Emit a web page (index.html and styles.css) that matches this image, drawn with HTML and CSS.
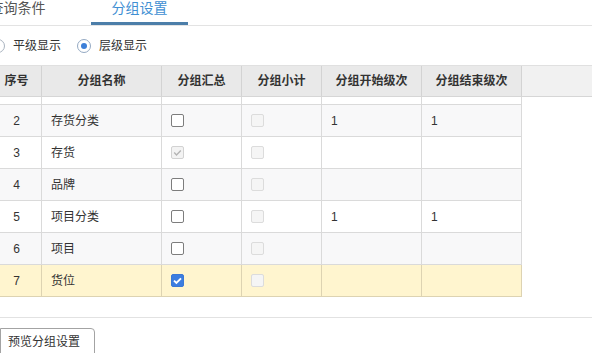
FILE: index.html
```html
<!DOCTYPE html>
<html lang="zh">
<head>
<meta charset="utf-8">
<title>分组设置</title>
<link rel="stylesheet" href="styles.css">
</head>
<body>
<div class="page">
  <div class="tabs">
    <div class="tab">查询条件</div>
    <div class="tab active">分组设置</div>
  </div>
  <div class="radios">
    <label class="radio-item first"><span class="radio"></span><span>平级显示</span></label>
    <label class="radio-item"><span class="radio on"></span><span>层级显示</span></label>
  </div>
  <div class="grid">
    <div class="head">
      <div class="hc">序号</div>
      <div class="hc">分组名称</div>
      <div class="hc">分组汇总</div>
      <div class="hc">分组小计</div>
      <div class="hc">分组开始级次</div>
      <div class="hc">分组结束级次</div>
      <div class="hfill"></div>
    </div>
    <div class="body">
      <div class="rows">
        <div class="row">
          <div class="c num"></div><div class="c"></div>
          <div class="c"></div><div class="c"></div>
          <div class="c"></div><div class="c"></div>
        </div>
        <div class="row alt">
          <div class="c num">2</div><div class="c">存货分类</div>
          <div class="c"><span class="cb"></span></div>
          <div class="c"><span class="cb dis"></span></div>
          <div class="c">1</div><div class="c">1</div>
        </div>
        <div class="row">
          <div class="c num">3</div><div class="c">存货</div>
          <div class="c"><span class="cb dis checked-dis"><svg viewBox="0 0 13 13" width="13" height="13"><path d="M3.2 6.6 L5.5 8.9 L9.8 4.4" fill="none" stroke="#b4b4b4" stroke-width="1.4"/></svg></span></div>
          <div class="c"><span class="cb dis"></span></div>
          <div class="c"></div><div class="c"></div>
        </div>
        <div class="row alt">
          <div class="c num">4</div><div class="c">品牌</div>
          <div class="c"><span class="cb"></span></div>
          <div class="c"><span class="cb dis"></span></div>
          <div class="c"></div><div class="c"></div>
        </div>
        <div class="row">
          <div class="c num">5</div><div class="c">项目分类</div>
          <div class="c"><span class="cb"></span></div>
          <div class="c"><span class="cb dis"></span></div>
          <div class="c">1</div><div class="c">1</div>
        </div>
        <div class="row alt">
          <div class="c num">6</div><div class="c">项目</div>
          <div class="c"><span class="cb"></span></div>
          <div class="c"><span class="cb dis"></span></div>
          <div class="c"></div><div class="c"></div>
        </div>
        <div class="row sel">
          <div class="c num">7</div><div class="c">货位</div>
          <div class="c"><span class="cb on"><svg viewBox="0 0 13 13" width="13" height="13"><path d="M3 6.6 L5.4 9 L10 4.3" fill="none" stroke="#ffffff" stroke-width="1.9"/></svg></span></div>
          <div class="c"><span class="cb dis"></span></div>
          <div class="c"></div><div class="c"></div>
        </div>
      </div>
    </div>
  </div>
  <div class="toolbar">
    <button class="btn">预览分组设置</button>
  </div>
</div>
</body>
</html>
```
FILE: styles.css
```css
html, body {
  margin: 0;
  padding: 0;
  background: #ffffff;
}
body {
  width: 592px;
  height: 353px;
  overflow: hidden;
  font-family: "Liberation Sans", "Noto Sans CJK SC", sans-serif;
  font-size: 12px;
  color: #333333;
}
.page {
  width: 592px;
}
.tabs {
  display: flex;
  gap: 25px;
  height: 25px;
  border-bottom: 1px solid #e3e3e3;
  margin-left: -31px;
}
.tab {
  box-sizing: border-box;
  width: 97px;
  height: 25px;
  text-align: center;
  font-size: 14px;
  line-height: 16px;
  color: #555555;
}
.tab.active {
  color: #3f8fd3;
  border-bottom: 3px solid #4c7ea9;
}
.radios {
  display: flex;
  align-items: center;
  height: 39px;
  gap: 16px;
}
.radio-item {
  display: flex;
  align-items: center;
  gap: 8px;
  line-height: 14px;
}
.radio-item.first {
  margin-left: -9px;
}
.radio {
  box-sizing: border-box;
  width: 14px;
  height: 14px;
  border-radius: 50%;
  border: 1px solid #a9b3bf;
  background: #ffffff;
  display: flex;
  align-items: center;
  justify-content: center;
}
.radio.on {
  border-color: #94a9c3;
}
.radio.on::after {
  content: "";
  width: 6px;
  height: 6px;
  border-radius: 50%;
  background: #3c7fd8;
}
.grid {
  margin-left: -8px;
  width: 600px;
}
.head {
  display: grid;
  grid-template-columns: 50px 120px 80px 80px 100px 100px 1fr;
  height: 32px;
  box-sizing: border-box;
  border-top: 1px solid #e0e0e0;
  border-bottom: 1px solid #d6d6d6;
}
.hc {
  box-sizing: border-box;
  background: #e9e9e9;
  border-right: 1px solid #d3d3d3;
  font-weight: 700;
  display: flex;
  align-items: center;
  justify-content: center;
  line-height: 16px;
  color: #333333;
}
.hfill {
  background: #f1f1f1;
}
.body {
  height: 200px;
  overflow: hidden;
  width: 530px;
}
.rows {
  margin-top: -24px;
}
.row {
  display: grid;
  grid-template-columns: 50px 120px 80px 80px 100px 100px;
  height: 32px;
  box-sizing: border-box;
  border-bottom: 1px solid #dadada;
  background: #ffffff;
}
.row.alt {
  background: #f8f8f9;
}
.row.sel {
  background: #fff5cf;
  border-bottom-color: #ddd3b2;
}
.c {
  box-sizing: border-box;
  border-right: 1px solid #dadada;
  padding-left: 9px;
  display: flex;
  align-items: center;
  line-height: 16px;
}
.row.sel .c {
  border-right-color: #ddd3b2;
}
.c.num {
  justify-content: center;
  padding-left: 0;
}
.cb {
  box-sizing: border-box;
  width: 13px;
  height: 13px;
  border: 1px solid #7d7d7d;
  border-radius: 2px;
  background: #ffffff;
  display: flex;
  align-items: center;
  justify-content: center;
  overflow: hidden;
  margin-top: -1px;
}
.cb svg {
  display: block;
  flex: none;
}
.cb.dis {
  border-color: #dcdcdc;
  background: #f5f5f5;
}
.cb.checked-dis {
  border-color: #d2d2d2;
  background: #f3f3f3;
}
.cb.on {
  border-color: #3a78d6;
  background: #3c7de0;
}
.toolbar {
  margin-top: 20px;
  border-top: 1px solid #e2e2e2;
  padding-top: 10px;
}
.btn {
  box-sizing: border-box;
  height: 28px;
  width: 95px;
  margin: 0;
  padding: 0 0 0 7px;
  text-align: left;
  font-family: "Liberation Sans", "Noto Sans CJK SC", sans-serif;
  font-size: 12px;
  color: #333333;
  background: #ffffff;
  border: 1px solid #a3a3a3;
  border-radius: 0 4px 0 0;
  line-height: 24px;
  vertical-align: top;
}
```
